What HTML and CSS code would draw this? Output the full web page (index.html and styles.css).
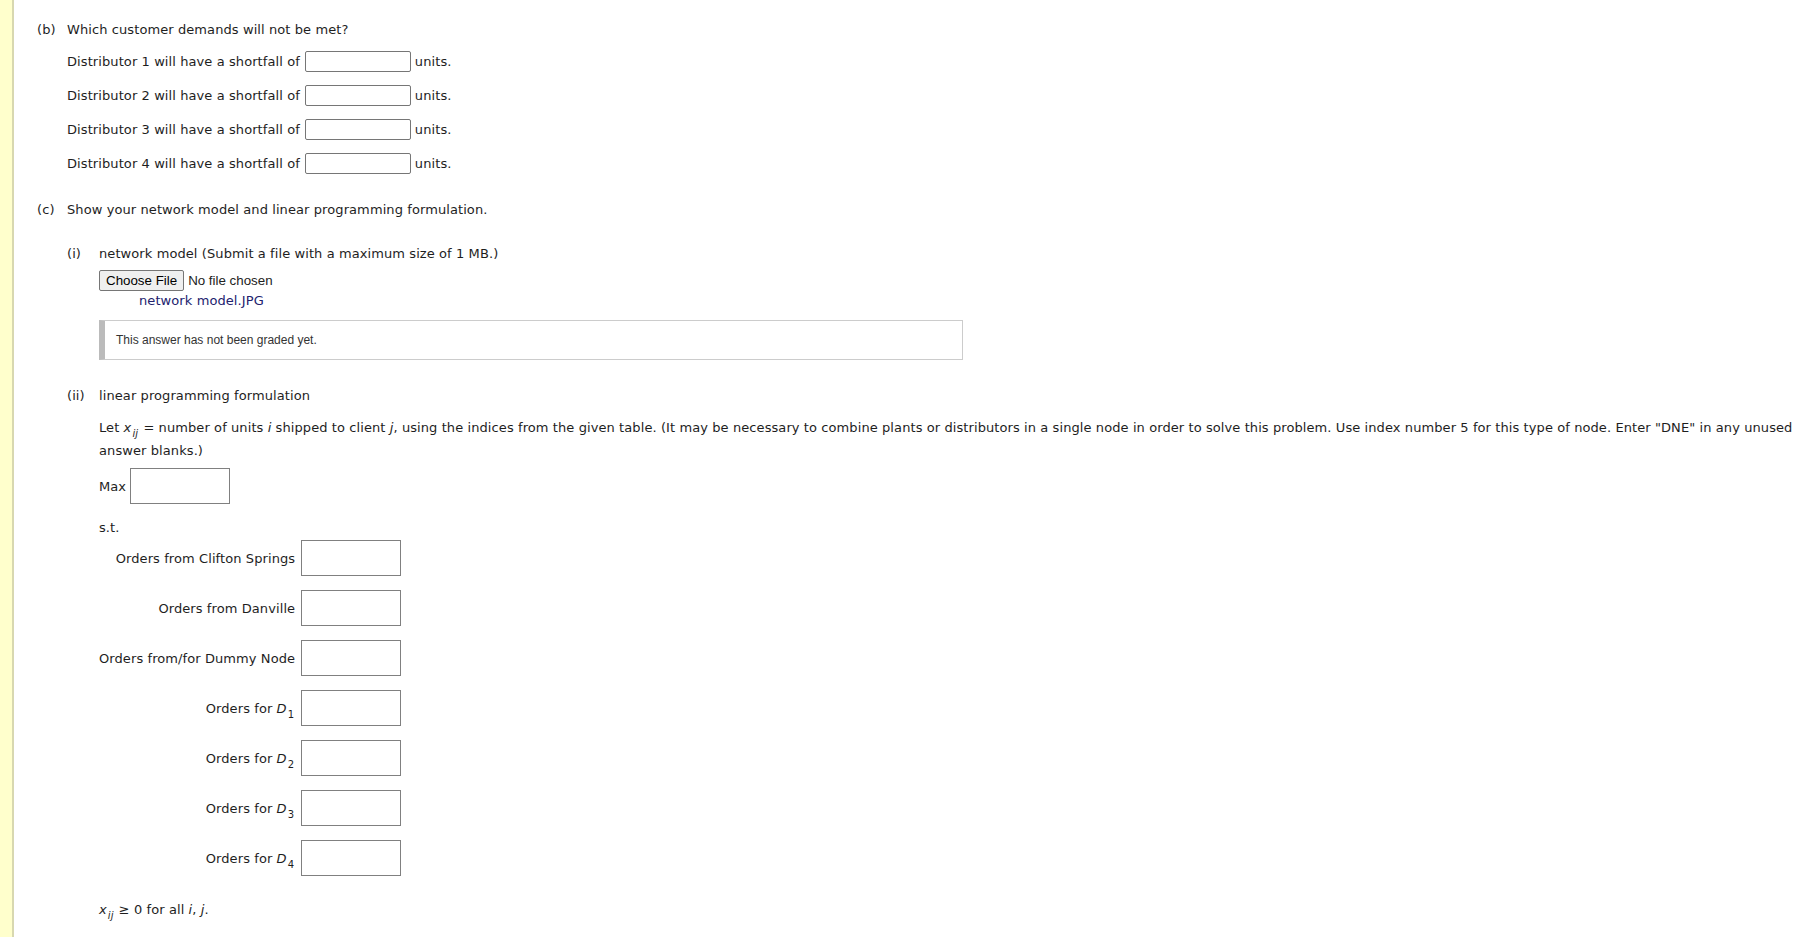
FILE: index.html
```html
<!DOCTYPE html>
<html lang="en">
<head>
    <meta charset="UTF-8">
    <title>Network Model</title>
    <link rel="stylesheet" href="styles.css">
</head>
<body>
    <div class="page">
        <div class="stripe"></div>
        <div class="main">
            <!-- (b) shortfalls -->
            <div class="part part-b">
                <span class="part-label">(b)</span>
                <div class="part-body">
                    <div class="line">Which customer demands will not be met?</div>
                    <div class="short-row">Distributor 1 will have a shortfall of <input type="text" class="small-box"> units.</div>
                    <div class="short-row">Distributor 2 will have a shortfall of <input type="text" class="small-box"> units.</div>
                    <div class="short-row">Distributor 3 will have a shortfall of <input type="text" class="small-box"> units.</div>
                    <div class="short-row">Distributor 4 will have a shortfall of <input type="text" class="small-box"> units.</div>
                </div>
            </div>

            <!-- (c) model -->
            <div class="part part-c">
                <span class="part-label">(c)</span>
                <div class="part-body">
                    <div class="line">Show your network model and linear programming formulation.</div>

                    <div class="sub sub-i">
                        <span class="sub-label">(i)</span>
                        <div class="sub-body">
                            <div class="line">network model (Submit a file with a maximum size of 1 MB.)</div>
                            <div class="file-row">
                                <button class="file-btn">Choose File</button>
                                <span class="file-none">No file chosen</span>
                            </div>
                            <div class="file-name">network model.JPG</div>
                            <div class="graded">This answer has not been graded yet.</div>
                        </div>
                    </div>

                    <div class="sub sub-ii">
                        <span class="sub-label">(ii)</span>
                        <div class="sub-body">
                            <div class="line">linear programming formulation</div>
                            <p class="let">Let <i>x</i><sub><i>ij</i></sub> = number of units <i>i</i> shipped to client <i>j</i>, using the indices from the given table. (It may be necessary to combine plants or distributors in a single node in order to solve this problem. Use index number 5 for this type of node. Enter "DNE" in any unused answer blanks.)</p>
                            <div class="max-row">
                                <span>Max</span>
                                <input type="text" class="big-box">
                            </div>
                            <div class="line st">s.t.</div>
                            <div class="constraints">
                                <span class="c-label">Orders from Clifton Springs</span>
                                <input type="text" class="big-box">
                                <span class="c-label">Orders from Danville</span>
                                <input type="text" class="big-box">
                                <span class="c-label">Orders from/for Dummy Node</span>
                                <input type="text" class="big-box">
                                <span class="c-label">Orders for <i>D</i><sub>1</sub></span>
                                <input type="text" class="big-box">
                                <span class="c-label">Orders for <i>D</i><sub>2</sub></span>
                                <input type="text" class="big-box">
                                <span class="c-label">Orders for <i>D</i><sub>3</sub></span>
                                <input type="text" class="big-box">
                                <span class="c-label">Orders for <i>D</i><sub>4</sub></span>
                                <input type="text" class="big-box">
                            </div>
                            <div class="line nonneg"><i>x</i><sub><i>ij</i></sub> &ge; 0 for all <i>i</i>, <i>j</i>.</div>
                        </div>
                    </div>
                </div>
            </div>
        </div>
    </div>
</body>
</html>
```

FILE: styles.css
```css
body {
    margin: 0;
    font-family: "DejaVu Sans", Verdana, sans-serif;
    font-size: 13px;
    letter-spacing: 0.09px;
    color: #1e1e1e;
    background-color: #ffffff;
}

.page {
    display: flex;
    min-height: 937px;
}

.stripe {
    width: 12px;
    background-color: #ffffcc;
    border-right: 2px solid #d8d8b0;
    flex-shrink: 0;
}

.main {
    flex: 1;
    padding: 22px 10px 0 23px;
}

.line {
    line-height: 16px;
}

.part {
    display: flex;
}

.part-label {
    width: 30px;
    line-height: 16px;
    flex-shrink: 0;
}

.part-body {
    flex: 1;
}

/* (b) */
.part-b .part-body {
    display: flex;
    flex-direction: column;
    gap: 13px;
}

.short-row {
    display: flex;
    align-items: center;
    height: 21px;
}

.small-box {
    width: 106px;
    height: 21px;
    box-sizing: border-box;
    border: 1px solid #767676;
    border-radius: 2px;
    margin: 0 4px 0 5px;
    padding: 0;
}

/* (c) */
.part-c {
    margin-top: 28px;
}

.sub {
    display: flex;
    margin-top: 28px;
}

.sub-label {
    width: 32px;
    line-height: 16px;
    flex-shrink: 0;
}

.sub-body {
    flex: 1;
}

.file-row {
    margin-top: 8px;
    display: flex;
    align-items: center;
    font-family: "Liberation Sans", Arial, sans-serif;
    font-size: 13.33px;
    letter-spacing: 0;
}

.file-btn {
    font-family: "Liberation Sans", Arial, sans-serif;
    font-size: 13.33px;
    height: 21px;
    padding: 0 6px;
    background-color: #efefef;
    border: 1px solid #767676;
    border-radius: 2px;
    color: #000;
}

.file-none {
    margin-left: 4px;
    color: #222;
}

.file-name {
    margin: 2px 0 0 40px;
    line-height: 16px;
    color: #22226e;
}

.graded {
    margin-top: 11px;
    width: 864px;
    height: 40px;
    box-sizing: border-box;
    border: 1px solid #cccccc;
    border-left: 6px solid #bbbbbb;
    padding-left: 11px;
    display: flex;
    align-items: center;
    font-family: "Liberation Sans", Arial, sans-serif;
    font-size: 12px;
    letter-spacing: 0;
    color: #333;
}

.let {
    margin: 12px 0 0 0;
    line-height: 23px;
}

.let sub, .c-label sub, .nonneg sub {
    font-size: 10px;
    line-height: 0;
    vertical-align: -5px;
    margin-left: 1px;
    margin-right: 1px;
}

.max-row {
    margin-top: 6px;
    display: flex;
    align-items: center;
    gap: 4px;
}

.big-box {
    width: 100px;
    height: 36px;
    box-sizing: border-box;
    border: 1px solid #808080;
    margin: 0;
    padding: 0;
}

.st {
    margin-top: 16px;
}

.constraints {
    margin-top: 4px;
    display: grid;
    grid-template-columns: max-content 100px;
    column-gap: 6px;
    row-gap: 14px;
    align-items: center;
    justify-items: end;
}

.nonneg {
    margin-top: 26px;
}
```
